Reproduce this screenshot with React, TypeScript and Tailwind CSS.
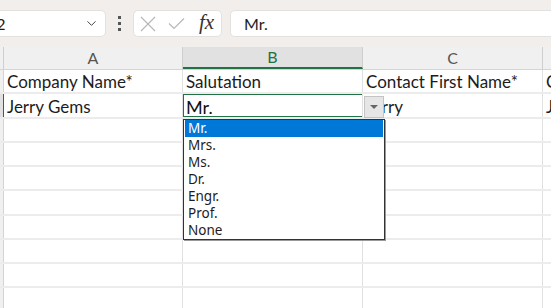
import { ChevronDown } from 'lucide-react'

const cols = [
  { key: 'A', width: 'w-[179px]' },
  { key: 'B', width: 'w-[180px]' },
  { key: 'C', width: 'w-[180px]' },
  { key: 'D', width: 'w-[60px]' },
]

const rows: string[][] = [
  ['Company Name*', 'Salutation', 'Contact First Name*', 'Contact Last Name*'],
  ['Jerry Gems', 'Mr.', 'Jerry', 'Jones'],
  ['', '', '', ''],
  ['', '', '', ''],
  ['', '', '', ''],
  ['', '', '', ''],
  ['', '', '', ''],
  ['', '', '', ''],
  ['', '', '', ''],
  ['', '', '', ''],
]

const options = ['Mr.', 'Mrs.', 'Ms.', 'Dr.', 'Engr.', 'Prof.', 'None']

export default function App() {
  return (
    <div className="relative h-[308px] w-[551px] overflow-hidden bg-white font-['Lato',sans-serif] text-[#1c1c1c]">
      {/* formula bar */}
      <div className="flex h-[47px] items-start bg-[#f1eeec] pt-[10px]">
        <div className="-ml-[60px] flex h-[27px] w-[166px] shrink-0 items-center rounded-[5px] border border-[#e4e0de] bg-white pl-[45px] pr-[6px] text-[16px]">
          <span className="flex-1">B2</span>
          <ChevronDown size={15} strokeWidth={1.6} className="text-[#444]" />
        </div>
        <div className="flex h-[27px] w-[27px] shrink-0 flex-col items-center justify-center gap-[3px]">
          <span className="h-[3px] w-[3px] bg-[#555]" />
          <span className="h-[3px] w-[3px] bg-[#555]" />
          <span className="h-[3px] w-[3px] bg-[#555]" />
        </div>
        <div className="flex h-[27px] w-[89px] shrink-0 items-center rounded-[5px] border border-[#e4e0de] bg-white pl-[6px]">
          <svg width="16" height="16" viewBox="0 0 16 16" className="text-[#b8b8b8]">
            <path d="M1 1 15 15M15 1 1 15" stroke="currentColor" strokeWidth="1.2" fill="none" />
          </svg>
          <svg width="17" height="13" viewBox="0 0 17 13" className="ml-[12px] text-[#b8b8b8]">
            <path d="M1 6.5 6 11.5 16 1.5" stroke="currentColor" strokeWidth="1.2" fill="none" />
          </svg>
          <span className="ml-[14px] -mt-[2px] font-['Liberation_Serif',serif] text-[21px] italic leading-none text-[#333]">fx</span>
        </div>
        <div className="ml-[8px] flex h-[27px] flex-1 items-center rounded-l-[5px] border border-r-0 border-[#e4e0de] bg-white pl-[13px] text-[16px]">
          Mr.
        </div>
      </div>

      {/* column headers */}
      <div className="flex h-[23px] border-b border-[#d4d4d4] bg-[#f0f0f0] text-[16px] text-[#555]">
        <div className="w-[4px] shrink-0 border-r border-[#cfcfcf]" />
        {cols.map((c) => (
          <div
            key={c.key}
            className={
              c.key === 'B'
                ? `${c.width} flex shrink-0 items-center justify-center border-r border-b-2 border-r-[#cfcfcf] border-b-[#217346] bg-[#e1e1e1] text-[#1e7145]`
                : `${c.width} flex shrink-0 items-center justify-center border-r border-[#cfcfcf]`
            }
          >
            {c.key === 'D' ? '' : c.key}
          </div>
        ))}
      </div>

      {/* cells */}
      {rows.map((r, i) => (
        <div key={i} className="flex h-[24.25px] border-b-2 border-[#ececec] text-[17px] leading-[20px]">
          <div className={i === 1 ? 'w-[4px] shrink-0 border-r border-[#217346] bg-[#e1e1e1]' : 'w-[4px] shrink-0 border-r border-[#d4d4d4] bg-[#f0f0f0]'} />
          {cols.map((c, j) => (
            <div
              key={c.key}
              className={`${c.width} relative flex shrink-0 items-end overflow-hidden whitespace-nowrap border-r border-[#e0e0e0] pl-[3px]`}
            >
              {i === 1 && j === 1 ? <span className="text-[18px] text-[#111]">{r[j]}</span> : r[j]}
              {i === 1 && j === 1 && (
                <div className="absolute -top-[1px] -left-[1px] h-[25px] w-[182px] border-2 border-[#217346]" />
              )}
            </div>
          ))}
        </div>
      ))}

      {/* validation dropdown button */}
      <div className="absolute left-[364px] top-[96px] flex h-[22px] w-[20px] items-center justify-center border border-[#c4c4c4] bg-[#e6e6e6]">
        <div className="h-0 w-0 border-x-[4px] border-t-[4px] border-x-transparent border-t-[#666]" />
      </div>

      {/* validation list */}
      <div className="absolute left-[183px] top-[119px] w-[202px] border border-[#333] bg-white font-['Noto_Sans',sans-serif] text-[13.5px] shadow-[1px_1px_0_#999]">
        {options.map((o, i) => (
          <div
            key={o}
            className={
              i === 0
                ? 'mx-[1px] flex h-[17px] items-center bg-[#0078d7] pl-[3px] text-white'
                : 'mx-[1px] flex h-[17px] items-center pl-[3px] text-[#1c1c1c]'
            }
          >
            {o}
          </div>
        ))}
      </div>
    </div>
  )
}
